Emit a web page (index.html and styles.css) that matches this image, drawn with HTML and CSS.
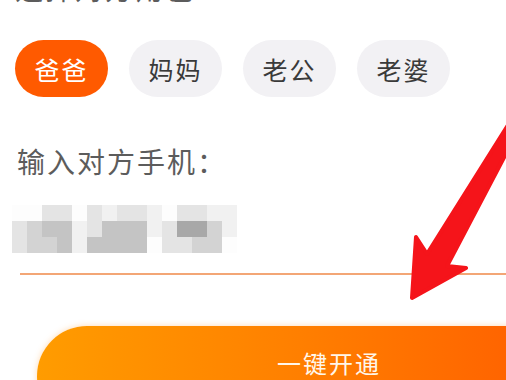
FILE: index.html
```html
<!DOCTYPE html>
<html lang="zh-CN">

<head>
  <meta charset="UTF-8" />
  <meta name="viewport" content="width=device-width, initial-scale=1.0" />
  <title>开通亲情号</title>
  <link rel="stylesheet" href="styles.css">
</head>

<body>
  <div class="pagina">
    <div class="titulo">选择对方角色：</div>
    <div class="roles">
      <button class="rol activo">爸爸</button>
      <button class="rol">妈妈</button>
      <button class="rol">老公</button>
      <button class="rol">老婆</button>
    </div>
    <div class="titulo etiqueta">输入对方手机：</div>
    <div class="telefono">
      <div class="mosaico">
        <span class="c0"></span><span class="c0"></span><span class="c2"></span><span class="c2"></span><span class="c0"></span><span class="c2"></span><span class="c1"></span><span class="c2"></span><span class="c2"></span><span class="c1"></span><span class="c0"></span><span class="c2"></span><span class="c2"></span><span class="c1"></span><span class="c1"></span>
        <span class="c2"></span><span class="c3"></span><span class="c4"></span><span class="c4"></span><span class="c1"></span><span class="c2"></span><span class="c4"></span><span class="c4"></span><span class="c4"></span><span class="c1"></span><span class="c2"></span><span class="c5"></span><span class="c5"></span><span class="c3"></span><span class="c1"></span>
        <span class="c2"></span><span class="c3"></span><span class="c3"></span><span class="c4"></span><span class="c1"></span><span class="c4"></span><span class="c4"></span><span class="c4"></span><span class="c4"></span><span class="c0"></span><span class="c2"></span><span class="c2"></span><span class="c3"></span><span class="c3"></span><span class="c0"></span>
      </div>
    </div>
    <button class="abrir">一键开通</button>
  </div>

  <svg class="flecha" width="506" height="380" viewBox="0 0 506 380">
    <polygon points="510,122 427,254 416,237 412,298 466,268 447,266 510,146"
      fill="#f5141a" stroke="#f5141a" stroke-width="4" stroke-linejoin="round" />
  </svg>
</body>

</html>
```

FILE: styles.css
```css
body {
  margin: 0;
  width: 506px;
  height: 380px;
  overflow: hidden;
  background: #fff;
  font-family: "Noto Sans CJK SC", "Noto Sans", sans-serif;
  position: relative;
}

.pagina {
  padding-left: 15px;
}

.titulo {
  font-size: 28px;
  line-height: 40px;
  letter-spacing: 2px;
  color: #5c5c5c;
  margin-top: -32px;
}

.titulo.etiqueta {
  margin-top: 44px;
  margin-left: 2px;
}

.roles {
  display: flex;
  gap: 21px;
  margin-top: 32px;
}

.rol {
  width: 93px;
  height: 57px;
  border: none;
  border-radius: 29px;
  background: #f2f1f4;
  color: #3a3a3a;
  font-family: inherit;
  font-size: 25px;
  letter-spacing: 2px;
  padding: 0;
}

.rol.activo {
  background: #ff5a00;
  color: #fff;
}

.telefono {
  height: 68px;
  margin-top: 24px;
  margin-left: 5px;
  border-bottom: 2px solid #f3a676;
}

.mosaico {
  display: grid;
  grid-template-columns: repeat(15, 15px);
  grid-template-rows: repeat(3, 16px);
  margin-top: 8px;
  margin-left: -8px;
}

.c0 { background: #fdfdfd; }
.c1 { background: #f1f1f1; }
.c2 { background: #e4e4e4; }
.c3 { background: #d3d3d3; }
.c4 { background: #c4c4c4; }
.c5 { background: #a8a8a8; }

.abrir {
  display: block;
  width: 584px;
  height: 100px;
  margin-top: 51px;
  margin-left: 22px;
  border: none;
  border-radius: 50px;
  background: linear-gradient(90deg, #ff9c00 0%, #ff7f00 45%, #ff5600 100%);
  box-shadow: 0 0 6px rgba(255, 150, 40, 0.35);
  color: #fff6ea;
  font-family: inherit;
  font-size: 24px;
  letter-spacing: 2px;
  text-align: center;
  padding: 0 0 28px;
}

.flecha {
  position: absolute;
  left: 0;
  top: 0;
}
```
